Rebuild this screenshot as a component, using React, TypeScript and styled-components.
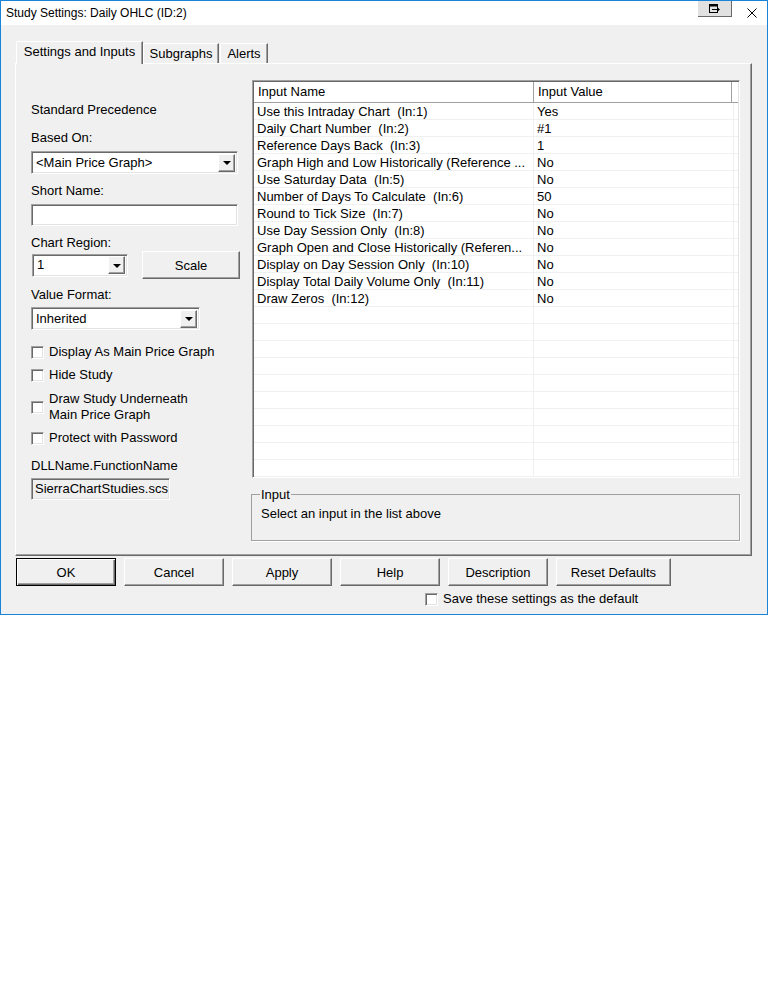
import styled, { createGlobalStyle, css } from "styled-components";

const GlobalStyle = createGlobalStyle`
  * { box-sizing: border-box; }
  body {
    margin: 0;
    background: #ffffff;
    font-family: "Liberation Sans", Arial, sans-serif;
    font-size: 13px;
    color: #000;
  }
`;

const sunken = css`
  border-style: solid;
  border-width: 1px;
  border-color: #a0a0a0 #ffffff #ffffff #a0a0a0;
  box-shadow: inset 1px 1px 0 #696969, inset -1px -1px 0 #e3e3e3;
`;

const raised = css`
  border-style: solid;
  border-width: 1px;
  border-color: #ffffff #696969 #696969 #ffffff;
  box-shadow: inset -1px -1px 0 #a0a0a0;
`;

const Window = styled.div`
  width: 768px;
  height: 615px;
  border: 1px solid #1883d7;
  background: #f0f0f0;
  display: flex;
  flex-direction: column;
`;

const TitleBar = styled.div`
  height: 24px;
  background: #ffffff;
  display: flex;
  align-items: flex-start;
  padding-left: 5px;
`;

const TitleText = styled.div`
  font-size: 12px;
  line-height: 16px;
  margin-top: 4px;
  flex: 1;
`;

const RestoreBtn = styled.div`
  width: 34px;
  height: 16px;
  background: #e1e1e1;
  border-right: 1px solid #696969;
  border-bottom: 1px solid #696969;
  display: flex;
  align-items: center;
  justify-content: center;
`;

const CloseBox = styled.div`
  width: 10px;
  height: 10px;
  margin: 7px 10px 0 15px;
  display: flex;
`;

const Body = styled.div`
  flex: 1;
  padding: 16px 15px 0 14px;
  display: flex;
  flex-direction: column;
`;

const TabRow = styled.div`
  display: flex;
  align-items: flex-end;
  height: 22px;
  padding-left: 1px;
`;

const Tab = styled.div<{ $active?: boolean; $w: number; $ml?: number }>`
  width: ${(p) => p.$w}px;
  margin-left: ${(p) => p.$ml ?? 0}px;
  height: ${(p) => (p.$active ? 23 : 20)}px;
  margin-bottom: ${(p) => (p.$active ? -1 : 0)}px;
  position: relative;
  z-index: ${(p) => (p.$active ? 2 : 1)};
  background: #f0f0f0;
  border-top: 1px solid #ffffff;
  border-left: 1px solid #ffffff;
  border-right: 1px solid #696969;
  box-shadow: inset -1px 0 0 #a0a0a0;
  border-top-left-radius: 2px;
  display: flex;
  align-items: ${(p) => (p.$active ? "flex-start" : "center")};
  padding-top: ${(p) => (p.$active ? 2 : 0)}px;
  justify-content: center;
  line-height: 16px;
`;

const Panel = styled.div`
  height: 493px;
  border-style: solid;
  border-width: 1px;
  border-color: #ffffff #696969 #696969 #ffffff;
  box-shadow: inset -1px -1px 0 #a0a0a0;
  display: flex;
  padding: 16px 0 0 15px;
`;

const LeftCol = styled.div`
  width: 221px;
  display: flex;
  flex-direction: column;
`;

const Label = styled.div<{ $mt: number }>`
  margin-top: ${(p) => p.$mt}px;
  line-height: 16px;
  white-space: nowrap;
`;

const Combo = styled.div<{ $w: number; $mt?: number }>`
  ${sunken};
  width: ${(p) => p.$w}px;
  height: 23px;
  margin-top: ${(p) => p.$mt ?? 0}px;
  background: #ffffff;
  display: flex;
  align-items: center;
  padding: 0 2px 0 4px;
`;

const ComboText = styled.div`
  flex: 1;
  line-height: 16px;
  white-space: nowrap;
  overflow: hidden;
`;

const ArrowBtn = styled.div`
  ${raised};
  width: 17px;
  height: 18px;
  background: #f0f0f0;
  display: flex;
  align-items: center;
  justify-content: center;
  &::after {
    content: "";
    border-left: 4px solid transparent;
    border-right: 4px solid transparent;
    border-top: 4px solid #000;
    margin-top: 1px;
  }
`;

const TextField = styled.div<{ $w: number; $mt: number }>`
  ${sunken};
  width: ${(p) => p.$w}px;
  height: 22px;
  margin-top: ${(p) => p.$mt}px;
  background: #ffffff;
  padding: 0 2px 0 3px;
  line-height: 20px;
  white-space: nowrap;
  overflow: hidden;
`;

const ReadField = styled(TextField)`
  background: #f0f0f0;
`;

const RegionRow = styled.div`
  display: flex;
  align-items: center;
  height: 28px;
  gap: 14px;
  padding-left: 1px;
`;

const Button = styled.div<{ $w: number; $h?: number; $default?: boolean }>`
  ${raised};
  width: ${(p) => p.$w}px;
  height: ${(p) => p.$h ?? 28}px;
  background: #f0f0f0;
  display: flex;
  align-items: center;
  justify-content: center;
  white-space: nowrap;
  ${(p) =>
    p.$default &&
    css`
      border: 1px solid #000;
      box-shadow: inset 1px 1px 0 #ffffff, inset -1px -1px 0 #696969,
        inset -2px -2px 0 #a0a0a0;
    `}
`;

const CheckRow = styled.div<{ $mt: number }>`
  display: flex;
  align-items: center;
  margin-top: ${(p) => p.$mt}px;
  line-height: 16px;
  gap: 5px;
`;

const CheckBox = styled.div`
  ${sunken};
  width: 13px;
  height: 13px;
  background: #ffffff;
  flex-shrink: 0;
`;

const RightCol = styled.div`
  width: 488px;
  display: flex;
  flex-direction: column;
`;

const Table = styled.div`
  ${sunken};
  height: 398px;
  background: #ffffff;
  overflow: hidden;
  padding: 1px;
`;

const HeaderRow = styled.div`
  display: flex;
  height: 21px;
  border-bottom: 1px solid #a0a0a0;
`;

const HeadCell = styled.div<{ $w: number }>`
  width: ${(p) => p.$w}px;
  border-right: 1px solid #a0a0a0;
  padding-left: 4px;
  line-height: 19px;
  white-space: nowrap;
`;

const Row = styled.div`
  display: flex;
  height: 17px;
  border-bottom: 1px solid #f0f0f0;
`;

const Cell = styled.div<{ $w: number }>`
  width: ${(p) => p.$w}px;
  border-right: 1px solid #f0f0f0;
  padding-left: 3px;
  line-height: 17px;
  white-space: pre;
  overflow: hidden;
`;

const GroupBox = styled.div`
  position: relative;
  margin: 16px 0 0 -1px;
  height: 47px;
  border: 1px solid #a0a0a0;
  box-shadow: 1px 1px 0 #ffffff;
  padding: 11px 9px 0 9px;
  line-height: 16px;
`;

const GroupLegend = styled.div`
  position: absolute;
  top: -8px;
  left: 8px;
  padding: 0 1px;
  background: #f0f0f0;
  line-height: 16px;
`;

const ButtonRow = styled.div`
  display: flex;
  gap: 8px;
  margin-top: 2px;
  padding-left: 1px;
`;

const SaveRow = styled(CheckRow)`
  margin-left: 410px;
`;

const rows: [string, string][] = [
  ["Use this Intraday Chart  (In:1)", "Yes"],
  ["Daily Chart Number  (In:2)", "#1"],
  ["Reference Days Back  (In:3)", "1"],
  ["Graph High and Low Historically (Reference ...", "No"],
  ["Use Saturday Data  (In:5)", "No"],
  ["Number of Days To Calculate  (In:6)", "50"],
  ["Round to Tick Size  (In:7)", "No"],
  ["Use Day Session Only  (In:8)", "No"],
  ["Graph Open and Close Historically (Referen...", "No"],
  ["Display on Day Session Only  (In:10)", "No"],
  ["Display Total Daily Volume Only  (In:11)", "No"],
  ["Draw Zeros  (In:12)", "No"],
];

const allRows: [string, string][] = [
  ...rows,
  ...Array.from({ length: 10 }, () => ["", ""] as [string, string]),
];

function RestoreIcon() {
  return (
    <svg width="13" height="11" viewBox="0 0 13 11">
      <rect x="1.5" y="1.5" width="8" height="8" fill="none" stroke="#000" />
      <line x1="1" y1="2.5" x2="10" y2="2.5" stroke="#000" strokeWidth="2" />
      <line x1="4" y1="6.5" x2="11" y2="6.5" stroke="#000" />
      <path d="M9 4.5 L11.5 6.5 L9 8.5" fill="none" stroke="#000" />
    </svg>
  );
}

function CloseIcon() {
  return (
    <svg width="10" height="10" viewBox="0 0 10 10">
      <path d="M0.5 0.5 L9.5 9.5 M9.5 0.5 L0.5 9.5" stroke="#000" strokeWidth="1" />
    </svg>
  );
}

export default function App() {
  return (
    <>
      <GlobalStyle />
      <Window>
        <TitleBar>
          <TitleText>Study Settings: Daily OHLC (ID:2)</TitleText>
          <RestoreBtn>
            <RestoreIcon />
          </RestoreBtn>
          <CloseBox>
            <CloseIcon />
          </CloseBox>
        </TitleBar>
        <Body>
          <TabRow>
            <Tab $active $w={127}>Settings and Inputs</Tab>
            <Tab $w={76}>Subgraphs</Tab>
            <Tab $w={48} $ml={1}>Alerts</Tab>
          </TabRow>
          <Panel>
            <LeftCol>
              <Label $mt={22}>Standard Precedence</Label>
              <Label $mt={12}>Based On:</Label>
              <Combo $w={207} $mt={5}>
                <ComboText>&lt;Main Price Graph&gt;</ComboText>
                <ArrowBtn />
              </Combo>
              <Label $mt={9}>Short Name:</Label>
              <TextField $w={207} $mt={5} />
              <Label $mt={9}>Chart Region:</Label>
              <RegionRow>
                <Combo $w={96}>
                  <ComboText>1</ComboText>
                  <ArrowBtn />
                </Combo>
                <Button $w={98}>Scale</Button>
              </RegionRow>
              <Label $mt={8}>Value Format:</Label>
              <Combo $w={169} $mt={4}>
                <ComboText>Inherited</ComboText>
                <ArrowBtn />
              </Combo>
              <CheckRow $mt={14}>
                <CheckBox />
                Display As Main Price Graph
              </CheckRow>
              <CheckRow $mt={7}>
                <CheckBox />
                Hide Study
              </CheckRow>
              <CheckRow $mt={8}>
                <CheckBox />
                <span>
                  Draw Study Underneath
                  <br />
                  Main Price Graph
                </span>
              </CheckRow>
              <CheckRow $mt={7}>
                <CheckBox />
                Protect with Password
              </CheckRow>
              <Label $mt={12}>DLLName.FunctionName</Label>
              <ReadField $w={139} $mt={4}>SierraChartStudies.scs</ReadField>
            </LeftCol>
            <RightCol>
              <Table>
                <HeaderRow>
                  <HeadCell $w={280}>Input Name</HeadCell>
                  <HeadCell $w={198}>Input Value</HeadCell>
                </HeaderRow>
                {allRows.map(([name, value], i) => (
                  <Row key={i}>
                    <Cell $w={280}>{name}</Cell>
                    <Cell $w={200}>{value}</Cell>
                  </Row>
                ))}
              </Table>
              <GroupBox>
                <GroupLegend>Input</GroupLegend>
                Select an input in the list above
              </GroupBox>
            </RightCol>
          </Panel>
          <ButtonRow>
            <Button $w={100} $h={28} $default>OK</Button>
            <Button $w={100} $h={28}>Cancel</Button>
            <Button $w={100} $h={28}>Apply</Button>
            <Button $w={100} $h={28}>Help</Button>
            <Button $w={100} $h={28}>Description</Button>
            <Button $w={115} $h={28}>Reset Defaults</Button>
          </ButtonRow>
          <SaveRow $mt={5}>
            <CheckBox />
            Save these settings as the default
          </SaveRow>
        </Body>
      </Window>
    </>
  );
}
